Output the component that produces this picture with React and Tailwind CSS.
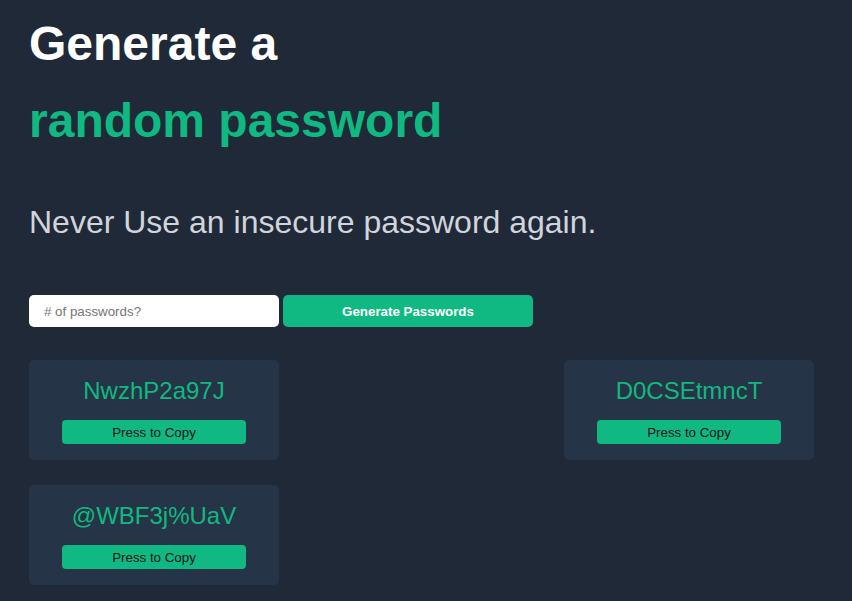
import React from "react";

const passwords = ["NwzhP2a97J", "", "D0CSEtmncT", "@WBF3j%UaV"];

function PasswordCard({ value }) {
  if (!value) return <div />;
  return (
    <div className="h-[100px] rounded-[5px] bg-[#263447] pt-[17px] pb-[16px] flex flex-col items-center">
      <p className="text-[24px] leading-[28px] text-[#10b981]">{value}</p>
      <button className="mt-[15px] h-[24px] w-[184px] rounded-[4px] bg-[#10b981] pt-[1px] text-[13.33px] text-[#111]">
        Press to Copy
      </button>
    </div>
  );
}

export default function App() {
  return (
    <div
      className="min-h-[601px] bg-[#1f2937] px-[29px] pb-[16px]"
      style={{ fontFamily: '"Liberation Sans", Arial, sans-serif' }}
    >
      <h1 className="pt-[5px] text-[48px] font-bold leading-[77px]">
        <span className="block text-white">Generate a</span>
        <span className="block text-[#10b981]">random password</span>
      </h1>
      <p className="mt-[43px] text-[32px] leading-[40px] text-[#d1d5db]">
        Never Use an insecure password again.
      </p>
      <div className="mt-[53px] flex gap-[4px]">
        <input
          type="number"
          placeholder="# of passwords?"
          className="h-[32px] w-[250px] rounded-[5px] bg-white px-[15px] pt-[1px] text-[13.33px] text-gray-900 outline-none placeholder:text-[#757575]"
        />
        <button className="h-[32px] w-[250px] rounded-[5px] bg-[#10b981] pt-[1px] text-[13.33px] font-bold text-white">
          Generate Passwords
        </button>
      </div>
      <div className="mt-[33px] grid w-[785px] grid-cols-[250px_250px_250px] justify-between gap-y-[25px]">
        {passwords.map((p, i) => (
          <PasswordCard key={i} value={p} />
        ))}
      </div>
    </div>
  );
}
